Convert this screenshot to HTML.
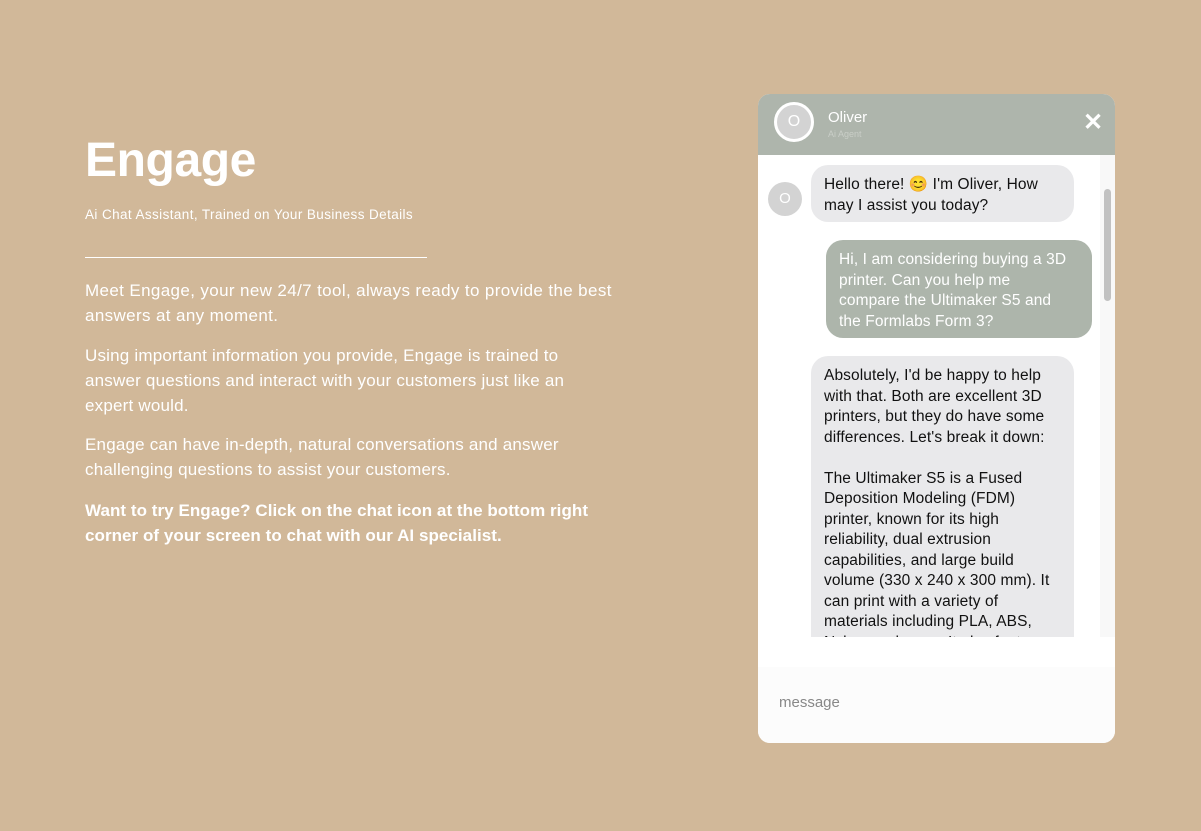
<!DOCTYPE html>
<html><head><meta charset="utf-8"><style>
body{margin:0;width:1201px;height:831px;background:#d1b899;font-family:"Liberation Sans",sans-serif;position:relative;overflow:hidden}
.a{position:absolute}
.lt{color:#fff;font-size:17px;line-height:25px;left:85px;letter-spacing:0.2px;white-space:nowrap}
.b{position:absolute;font-size:15.5px;line-height:20.5px;color:#111;background:#e9e9eb;border-radius:17px;padding:10px 13px;box-sizing:border-box;white-space:nowrap;letter-spacing:0.1px}
</style></head><body>
<div class="a" style="left:85px;top:133px;font-size:48px;font-weight:bold;color:#fff;letter-spacing:-0.4px">Engage</div>
<div class="a" style="left:85px;top:207px;font-size:13.5px;color:#fff;letter-spacing:0.4px">Ai Chat Assistant, Trained on Your Business Details</div>
<div class="a" style="left:85px;top:257px;width:342px;height:1px;background:#fff"></div>
<div class="a lt" style="top:278px;letter-spacing:0.37px">Meet Engage, your new 24/7 tool, always ready to provide the best<br>answers at any moment.</div>
<div class="a lt" style="top:343px">Using important information you provide, Engage is trained to<br>answer questions and interact with your customers just like an<br>expert would.</div>
<div class="a lt" style="top:432px">Engage can have in-depth, natural conversations and answer<br>challenging questions to assist your customers.</div>
<div class="a lt" style="top:498px;font-weight:bold;letter-spacing:0.05px">Want to try Engage? Click on the chat icon at the bottom right<br>corner of your screen to chat with our AI specialist.</div>

<div class="a" style="left:758px;top:94px;width:357px;height:649px;background:#fff;border-radius:12px;overflow:hidden">
 <div class="a" style="left:0;top:0;width:357px;height:61px;background:#aeb5ac"></div>
 <div class="a" style="left:16px;top:8px;width:34px;height:34px;border:3px solid #fff;border-radius:50%;background:#d3d3d3;color:#fff;font-size:16px;text-align:center;line-height:34px">O</div>
 <div class="a" style="left:70px;top:15px;color:#fff;font-size:15px">Oliver</div>
 <div class="a" style="left:70px;top:35px;color:#c9cec7;font-size:9px">Ai Agent</div>
 <div class="a" style="left:325px;top:14px;color:#fff;font-size:24px;font-weight:bold">✕</div>
 <div class="a" style="left:342px;top:61px;width:15px;height:482px;background:#f8f8f8"></div>
 <div class="a" style="left:346px;top:95px;width:7px;height:112px;background:#c1c1c1;border-radius:4px"></div>
 <div class="a" style="left:0;top:61px;width:342px;height:482px;overflow:hidden">
  <div class="a" style="left:10px;top:27px;width:34px;height:34px;border-radius:50%;background:#d3d3d3;color:#fff;font-size:15px;text-align:center;line-height:34px">O</div>
  <div class="b" style="left:53px;top:10px;width:263px;height:57px">Hello there! 😊 I'm Oliver, How<br>may I assist you today?</div>
  <div class="b" style="left:68px;top:85px;width:266px;height:98px;background:#adb5ab;color:#fff">Hi, I am considering buying a 3D<br>printer. Can you help me<br>compare the Ultimaker S5 and<br>the Formlabs Form 3?</div>
  <div class="b" style="left:53px;top:201px;width:263px;height:400px">Absolutely, I'd be happy to help<br>with that. Both are excellent 3D<br>printers, but they do have some<br>differences. Let's break it down:<br><br>The Ultimaker S5 is a Fused<br>Deposition Modeling (FDM)<br>printer, known for its high<br>reliability, dual extrusion<br>capabilities, and large build<br>volume (330 x 240 x 300 mm). It<br>can print with a variety of<br>materials including PLA, ABS,<br>Nylon, and more. It also features</div>
 </div>
 <div class="a" style="left:0;top:573px;width:357px;height:76px;background:#fcfcfc"></div>
 <div class="a" style="left:21px;top:600px;color:#888;font-size:15px">message</div>
</div>
</body></html>
